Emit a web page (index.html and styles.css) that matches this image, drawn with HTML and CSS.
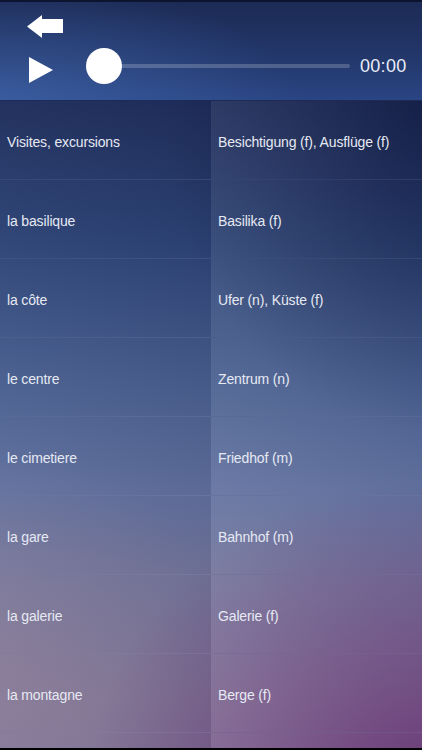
FILE: index.html
```html
<!DOCTYPE html>
<html>
<head>
<meta charset="utf-8">
<link rel="stylesheet" href="styles.css">
</head>
<body>
<div class="screen">
  <header class="header">
    <div class="back-row">
      <svg class="back" width="36" height="23" viewBox="0 0 36 23"><path d="M0 11.5 L15 0 L15 4 L36 4 L36 18 L15 18 L15 23 Z" fill="#fff"/></svg>
    </div>
    <div class="player">
      <svg class="play" width="25" height="26" viewBox="0 0 25 26"><path d="M1 0 L25 13 L1 26 Z" fill="#fff"/></svg>
      <div class="track"><div class="knob"></div></div>
      <div class="time">00:00</div>
    </div>
  </header>
  <main class="list">
    <div class="row"><div class="cell">Visites, excursions</div><div class="cell right">Besichtigung (f), Ausflüge (f)</div></div>
    <div class="row"><div class="cell">la basilique</div><div class="cell right">Basilika (f)</div></div>
    <div class="row"><div class="cell">la côte</div><div class="cell right">Ufer (n), Küste (f)</div></div>
    <div class="row"><div class="cell">le centre</div><div class="cell right">Zentrum (n)</div></div>
    <div class="row"><div class="cell">le cimetiere</div><div class="cell right">Friedhof (m)</div></div>
    <div class="row"><div class="cell">la gare</div><div class="cell right">Bahnhof (m)</div></div>
    <div class="row"><div class="cell">la galerie</div><div class="cell right">Galerie (f)</div></div>
    <div class="row"><div class="cell">la montagne</div><div class="cell right">Berge (f)</div></div>
    <div class="row"><div class="cell"></div><div class="cell right"></div></div>
  </main>
</div>
</body>
</html>
```

FILE: styles.css
```css
* { box-sizing: border-box; }
html, body { margin: 0; padding: 0; background: #000; }
body { font-family: "Liberation Sans", Arial, sans-serif; width: 422px; height: 750px; overflow: hidden; }
.screen { width: 422px; height: 748px; overflow: hidden; display: flex; flex-direction: column; }
.header {
  height: 101px;
  flex: none;
  border-top: 2px solid #0d1430;
  border-bottom: 1px solid #1c2b58;
  background:
    radial-gradient(ellipse 300px 120px at 0% 100%, rgba(70,110,180,0.55), rgba(70,110,180,0) 100%),
    linear-gradient(to bottom, #1c2a55 0%, #23386c 60%, #2a4584 100%);
  display: flex;
  flex-direction: column;
  padding: 13px 0 0 27px;
}
.back-row { height: 23px; display: flex; align-items: center; }
.player { display: flex; align-items: center; margin-top: 10px; height: 36px; }
.play { flex: none; margin-top: 8px; margin-left: 1px; }
.track {
  margin-left: 33px;
  width: 264px;
  height: 4px;
  border-radius: 2px;
  background: rgba(255,255,255,0.2);
  position: relative;
}
.knob {
  position: absolute;
  left: 0;
  top: 50%;
  width: 36px;
  height: 36px;
  margin-top: -18px;
  border-radius: 50%;
  background: #fff;
}
.time { margin-left: 10px; color: #e8ecf6; font-size: 18px; margin-top: 1px; letter-spacing: 0.3px; }
.list {
  flex: 1;
  background:
    radial-gradient(ellipse 340px 330px at 100% 100%, rgba(102,44,114,0.85), rgba(102,44,114,0) 100%),
    radial-gradient(ellipse 260px 330px at 100% 0%, rgba(14,22,58,0.55), rgba(14,22,58,0) 100%),
    radial-gradient(ellipse 240px 200px at 0% 78%, rgba(145,128,150,0.4), rgba(145,128,150,0) 100%),
    linear-gradient(to bottom, #1f2e5c 0%, #2d4476 20%, #4a6090 40%, #60709e 54%, #76779c 68%, #857a9a 84%, #86769a 100%);
}
.row { display: grid; grid-template-columns: 211px 211px; height: 79px; border-bottom: 1px solid rgba(120,130,170,0.2); }
.cell { color: #e6e9f3; font-size: 14px; letter-spacing: -0.15px; display: flex; align-items: center; padding-left: 7px; padding-top: 3px; background: linear-gradient(to right, rgba(255,255,255,0.02) 0%, rgba(10,10,40,0.07) 100%); }
.cell.right { padding-left: 7px; background: linear-gradient(to right, rgba(255,255,255,0.07) 0%, rgba(10,10,40,0.02) 100%); }
```
